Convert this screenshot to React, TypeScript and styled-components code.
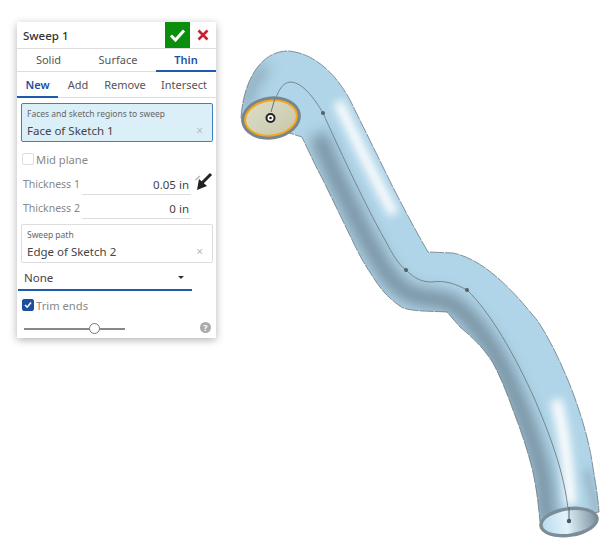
import React from 'react';
import styled, { createGlobalStyle } from 'styled-components';

const GlobalStyle = createGlobalStyle`
  html, body { margin: 0; padding: 0; background: #fff; }
  body { font-family: "Noto Sans", "Open Sans", "Liberation Sans", sans-serif; }
`;

const Stage = styled.div`
  position: relative;
  width: 609px;
  height: 548px;
  padding: 22px 0 0 17px;
  box-sizing: border-box;
  overflow: hidden;
`;

// The swept part is a drawing that sits behind the dialog
const PartCanvas = styled.svg`
  position: absolute;
  left: 0;
  top: 0;
`;

const Panel = styled.section`
  position: relative;
  width: 199px;
  height: 316px;
  background: #fff;
  box-shadow: 0 2px 8px rgba(0, 0, 0, 0.3);
  color: #444;
  font-size: 11.5px;
  display: flex;
  flex-direction: column;
`;

const Header = styled.header`
  height: 26px;
  display: flex;
  align-items: center;
  border-bottom: 1px solid #ddd;
`;

const Title = styled.h1`
  flex: 1;
  margin: 0;
  padding-left: 6px;
  font-size: 11.5px;
  font-weight: 500;
  color: #333;
`;

const Accept = styled.button`
  width: 25px;
  height: 26px;
  padding: 0;
  border: 0;
  background: #0a8f0c;
  display: flex;
  align-items: center;
  justify-content: center;
`;

const Cancel = styled.button`
  width: 26px;
  height: 26px;
  padding: 0;
  border: 0;
  background: none;
  display: flex;
  align-items: center;
  justify-content: center;
`;

const TabRow = styled.div<{ $columns: string; $height: number }>`
  display: grid;
  grid-template-columns: ${(p) => p.$columns};
  height: ${(p) => p.$height}px;
  border-bottom: 1px solid #ddd;
  box-sizing: border-box;
`;

const Tab = styled.div<{ $active?: boolean }>`
  display: flex;
  align-items: center;
  justify-content: center;
  font-size: 11px;
  margin-bottom: -1px;
  color: ${(p) => (p.$active ? '#1d4f9f' : '#555')};
  font-weight: ${(p) => (p.$active ? 600 : 400)};
  border-bottom: 2px solid ${(p) => (p.$active ? '#1d5bb0' : 'transparent')};
`;

const Body = styled.div`
  flex: 1;
  display: flex;
  flex-direction: column;
  padding: 5px 3px 0 4px;
`;

const Field = styled.div<{ $active?: boolean; $top?: number }>`
  height: 39px;
  box-sizing: border-box;
  margin-top: ${(p) => p.$top ?? 0}px;
  padding: 4px 5px 0;
  border-radius: 2px;
  border: 1px solid ${(p) => (p.$active ? '#3f80c4' : '#ddd')};
  background: ${(p) => (p.$active ? '#dbeff8' : '#fff')};
  display: flex;
  flex-direction: column;
`;

const FieldLabel = styled.span`
  font-size: 8.5px;
  line-height: 12px;
  color: #666;
`;

const FieldValue = styled.div`
  display: flex;
  justify-content: space-between;
  align-items: center;
  margin-top: 2px;
  font-size: 11.5px;
  line-height: 18px;
  color: #444;
`;

const Clear = styled.span`
  font-size: 12px;
  color: #bbb;
  padding-right: 4px;
`;

const CheckRow = styled.label<{ $top: number }>`
  display: flex;
  align-items: center;
  gap: 2px;
  margin-top: ${(p) => p.$top}px;
  height: 16px;
  font-size: 11.2px;
  color: #888;
`;

const CheckBox = styled.span<{ $checked?: boolean }>`
  width: 10px;
  height: 10px;
  margin-left: 1px;
  border-radius: 2px;
  border: 1px solid ${(p) => (p.$checked ? '#1d4f9f' : '#ddd')};
  background: ${(p) => (p.$checked ? '#1d4f9f' : '#fff')};
  display: flex;
  align-items: center;
  justify-content: center;
`;

const ThicknessRow = styled.div<{ $top: number }>`
  display: flex;
  align-items: flex-end;
  height: 20px;
  margin-top: ${(p) => p.$top}px;
  position: relative;
`;

const ThicknessLabel = styled.span`
  width: 61px;
  padding-left: 2px;
  box-sizing: border-box;
  font-size: 10.5px;
  line-height: 18px;
  color: #888;
  align-self: flex-start;
`;

const ThicknessInput = styled.span`
  width: 109px;
  box-sizing: border-box;
  text-align: right;
  padding-right: 2px;
  border-bottom: 1px solid #ddd;
  font-size: 11.5px;
  line-height: 18px;
  color: #444;
`;

const FlipArrow = styled.svg`
  position: absolute;
  left: 173px;
  top: -6px;
`;

const Select = styled.div`
  width: 174px;
  height: 26px;
  margin: 2px 0 0 -3px;
  padding: 0 8px 0 6px;
  box-sizing: border-box;
  border-bottom: 2px solid #1d5bb0;
  display: flex;
  align-items: center;
  justify-content: space-between;
  font-size: 11.5px;
  color: #444;
`;

const Caret = styled.span`
  width: 0;
  height: 0;
  border-left: 3.5px solid transparent;
  border-right: 3.5px solid transparent;
  border-top: 3.5px solid #333;
`;

const SliderRow = styled.div`
  display: flex;
  align-items: center;
  justify-content: space-between;
  margin-top: 11px;
  padding: 0 2px 0 3px;
`;

const SliderTrack = styled.div`
  position: relative;
  width: 101px;
  height: 2px;
  background: #888;
`;

const SliderThumb = styled.span`
  position: absolute;
  left: 65px;
  top: -5px;
  width: 11px;
  height: 11px;
  box-sizing: border-box;
  border-radius: 50%;
  border: 1px solid #777;
  background: #fff;
`;

const Help = styled.span`
  width: 11px;
  height: 11px;
  margin-top: -2px;
  border-radius: 50%;
  background: #aaa;
  color: #fff;
  font-size: 9px;
  font-weight: 700;
  line-height: 11px;
  text-align: center;
`;

const OUTLINE =
  'M241 118 C243 85 258 52 287 51 C312 52 335 72 350 100 L383 167 C398 198 413 226 428 252 L453 253 C478 258 502 280 520 300 L537 320 C552 342 565 372 573 393 C583 420 590 445 593 468 C596 485 598 498 599 512 L540 522 C538 500 536 485 532 468 C527 448 520 428 513 410 C507 393 501 378 493 363 C483 347 472 337 460 327 L447 312 C433 311 415 312 403 308 C390 300 381 290 373 277 C367 268 362 260 357 250 L323 180 C315 165 308 150 302 137 Z';
const CENTER =
  'M271 118 C275 95 281 82 291 82 C303 83 314 98 323 113 C335 140 365 205 385 240 C393 255 398 264 406 270 C415 279 422 282 432 282 C445 280 456 284 467 290 C490 312 515 355 535 400 C552 440 567 480 569 522';

const SweptPart = () => (
  <PartCanvas width={609} height={548} viewBox="0 0 609 548">
    <defs>
      <clipPath id="pipe">
        <path d={OUTLINE} />
      </clipPath>
      <filter id="soft" filterUnits="userSpaceOnUse" x="0" y="0" width="609" height="548">
        <feGaussianBlur stdDeviation="7" />
      </filter>
      <filter id="softer" filterUnits="userSpaceOnUse" x="0" y="0" width="609" height="548">
        <feGaussianBlur stdDeviation="4.500" />
      </filter>
      <linearGradient id="capInner" x1="0" x2="1" y1="0" y2="0">
        <stop offset="0" stopColor="#b9dcee" />
        <stop offset="0.45" stopColor="#e2f3fb" />
        <stop offset="1" stopColor="#7f97a5" />
      </linearGradient>
      <linearGradient id="capFace" x1="0" x2="1" y1="0" y2="1">
        <stop offset="0" stopColor="#dcdcc6" />
        <stop offset="1" stopColor="#c9c8ae" />
      </linearGradient>
    </defs>
    <g clipPath="url(#pipe)">
      <path d={OUTLINE} fill="#b0d5e8" />
      <path
        d="M318 135 L336 178 C350 205 362 232 374 252 C384 272 396 288 412 295 C430 300 445 298 456 306 C475 322 492 345 506 375 C520 405 535 445 543 478 L548 525"
        fill="none"
        stroke="#6f8796"
        strokeWidth="18"
        opacity="0.85"
        filter="url(#soft)"
      />
      <path d="M244 110 C248 90 255 78 266 66" fill="none" stroke="#7f98a8" strokeWidth="12" opacity="0.7" filter="url(#soft)" />
      <path d="M338 102 C352 130 372 175 394 214" fill="none" stroke="#ffffff" strokeWidth="10" filter="url(#softer)" />
      <path d="M556 400 C563 425 568 465 571 505" fill="none" stroke="#ffffff" strokeWidth="11" filter="url(#softer)" />
      <path d="M587 470 C590 485 594 500 597 515" fill="none" stroke="#7e98a8" strokeWidth="4" filter="url(#softer)" />
    </g>
    <path d={OUTLINE} fill="none" stroke="#66757f" strokeWidth="0.8" strokeDasharray="14 1" />
    <path d={CENTER} fill="none" stroke="#77868f" strokeWidth="1" />
    <circle cx="323" cy="113" r="2" fill="#555f66" />
    <circle cx="406" cy="270" r="2" fill="#555f66" />
    <circle cx="467" cy="290" r="2" fill="#555f66" />

    <g transform="rotate(-8 569 522)">
      <ellipse cx="569" cy="522" rx="30" ry="15" fill="#7d8d98" />
      <ellipse cx="569" cy="522" rx="26.500" ry="11.500" fill="url(#capInner)" />
    </g>
    <path d="M569 507 L569 522" stroke="#55606a" strokeWidth="1" />
    <circle cx="569" cy="521" r="2.200" fill="#4d5860" />

    <g transform="rotate(-8 271 118)">
      <ellipse cx="271" cy="118" rx="30" ry="21.500" fill="#77868f" />
      <ellipse cx="271" cy="118" rx="27" ry="18.500" fill="#f5a81c" />
      <ellipse cx="271" cy="118" rx="25" ry="16.500" fill="url(#capFace)" />
    </g>
    <path d="M275 98 L271 112" stroke="#66757f" strokeWidth="1" />
    <circle cx="270.500" cy="118" r="5" fill="#222" />
    <circle cx="270.500" cy="118" r="3" fill="#fff" />
    <circle cx="270.500" cy="118" r="1.300" fill="#222" />
  </PartCanvas>
);

const Arrow = () => (
  <FlipArrow width={20} height={22} viewBox="0 0 20 22">
    <path d="M17 5 L8 14" stroke="#222" strokeWidth="3" />
    <path d="M1.500 11 L6 7" stroke="#b5b5b5" strokeWidth="1.500" />
    <path d="M3 21 L5 10 L13 17 Z" fill="#222" />
  </FlipArrow>
);

export default function App() {
  return (
    <>
      <GlobalStyle />
      <Stage>
        <SweptPart />
        <Panel>
          <Header>
            <Title>Sweep 1</Title>
            <Accept aria-label="Accept">
              <svg width={17} height={14} viewBox="0 0 17 14">
                <path d="M2 7.500 L6.500 12 L15 2.500" fill="none" stroke="#fff" strokeWidth="3" />
              </svg>
            </Accept>
            <Cancel aria-label="Cancel">
              <svg width={12} height={12} viewBox="0 0 12 12">
                <path d="M1.500 1.500 L10.500 10.500 M10.500 1.500 L1.500 10.500" stroke="#c8202f" strokeWidth="2.600" />
              </svg>
            </Cancel>
          </Header>
          <TabRow $columns="63px 76px 60px" $height={23}>
            <Tab>Solid</Tab>
            <Tab>Surface</Tab>
            <Tab $active>Thin</Tab>
          </TabRow>
          <TabRow $columns="41px 40px 54px 64px" $height={26}>
            <Tab $active>New</Tab>
            <Tab>Add</Tab>
            <Tab>Remove</Tab>
            <Tab>Intersect</Tab>
          </TabRow>
          <Body>
            <Field $active>
              <FieldLabel>Faces and sketch regions to sweep</FieldLabel>
              <FieldValue>
                Face of Sketch 1<Clear>×</Clear>
              </FieldValue>
            </Field>
            <CheckRow $top={9}>
              <CheckBox />
              Mid plane
            </CheckRow>
            <ThicknessRow $top={8}>
              <ThicknessLabel>Thickness 1</ThicknessLabel>
              <ThicknessInput>0.05 in</ThicknessInput>
              <Arrow />
            </ThicknessRow>
            <ThicknessRow $top={4}>
              <ThicknessLabel>Thickness 2</ThicknessLabel>
              <ThicknessInput>0 in</ThicknessInput>
            </ThicknessRow>
            <Field $top={5}>
              <FieldLabel>Sweep path</FieldLabel>
              <FieldValue>
                Edge of Sketch 2<Clear>×</Clear>
              </FieldValue>
            </Field>
            <Select>
              None
              <Caret />
            </Select>
            <CheckRow $top={6}>
              <CheckBox $checked>
                <svg width={8} height={8} viewBox="0 0 8 8">
                  <path d="M1 4 L3.200 6.200 L7 1.500" fill="none" stroke="#fff" strokeWidth="1.500" />
                </svg>
              </CheckBox>
              Trim ends
            </CheckRow>
            <SliderRow>
              <SliderTrack>
                <SliderThumb />
              </SliderTrack>
              <Help>?</Help>
            </SliderRow>
          </Body>
        </Panel>
      </Stage>
    </>
  );
}
